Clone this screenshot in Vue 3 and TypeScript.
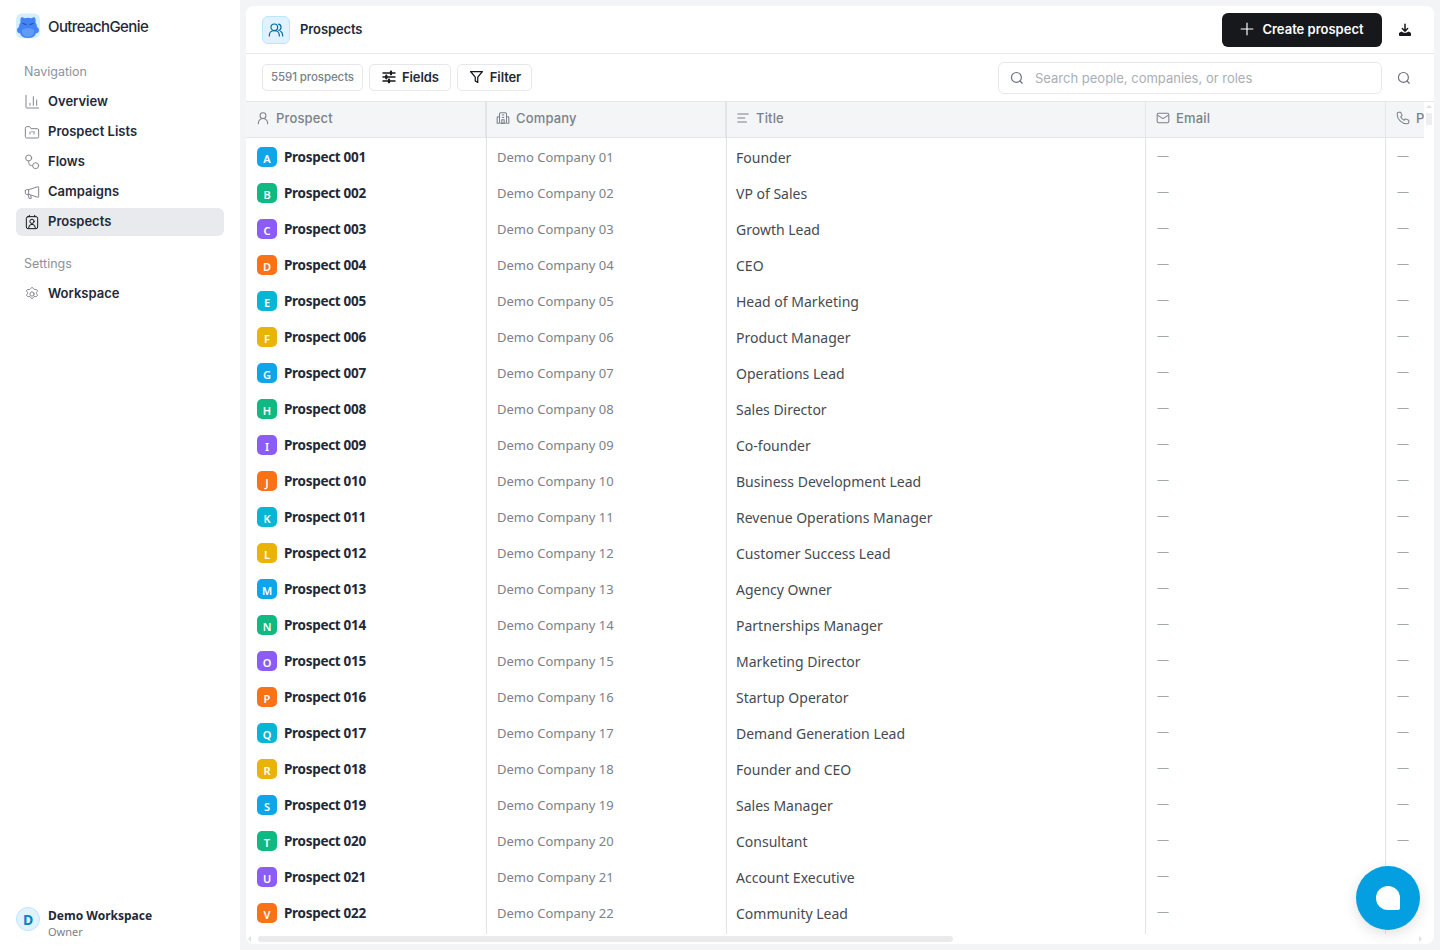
<script setup lang="ts">
const navItems = [
  { label: 'Overview', icon: 'chart' },
  { label: 'Prospect Lists', icon: 'folder' },
  { label: 'Flows', icon: 'flow' },
  { label: 'Campaigns', icon: 'megaphone' },
  { label: 'Prospects', icon: 'contact', active: true },
]

const titles = [
  'Founder', 'VP of Sales', 'Growth Lead', 'CEO', 'Head of Marketing', 'Product Manager',
  'Operations Lead', 'Sales Director', 'Co-founder', 'Business Development Lead',
  'Revenue Operations Manager', 'Customer Success Lead', 'Agency Owner', 'Partnerships Manager',
  'Marketing Director', 'Startup Operator', 'Demand Generation Lead', 'Founder and CEO',
  'Sales Manager', 'Consultant', 'Account Executive', 'Community Lead',
]
const colors = ['#0ea5e9', '#10b981', '#8b5cf6', '#f97316', '#06b6d4', '#eab308']

const rows = titles.map((title, i) => ({
  name: 'Prospect ' + String(i + 1).padStart(3, '0'),
  company: 'Demo Company ' + String(i + 1).padStart(2, '0'),
  title,
  letter: String.fromCharCode(65 + i),
  color: colors[i % colors.length],
}))
</script>

<template>
  <div class="page">
    <aside class="sidebar">
      <div class="brand">
        <svg class="logo" width="26" height="26" viewBox="0 0 26 26">
          <rect x="1" y="0.5" width="24" height="25" rx="6" fill="#d3eefc" />
          <path d="M6 4.500 Q7.500 3.500 9.500 5.200 Q13 4.500 16.500 5.200 Q18.500 3.500 20 4.500 Q21 7 20.500 9.500 Q22 11 22 14 Q25 16 23.500 19 Q22.500 20.500 21 20 Q20 25 13 25 Q6 25 5 20 Q3.500 20.500 2.500 19 Q1 16 4 14 Q4 11 5.500 9.500 Q5 7 6 4.500Z" fill="#4384f5" />
          <path d="M7 17 Q13 13 19 17 Q20 23 13 24 Q6 23 7 17Z" fill="#609bf9" />
          <path d="M8 10.500 L11 11.500M18 10.500 L15 11.500" stroke="#2450b0" stroke-width="1.300" stroke-linecap="round" />
        </svg>
        <span class="brand-name">OutreachGenie</span>
      </div>

      <div class="nav-label">Navigation</div>
      <nav class="nav">
        <a v-for="item in navItems" :key="item.label" class="nav-item" :class="{ active: item.active }">
          <svg class="nav-icon" width="16" height="16" viewBox="0 0 24 24" fill="none" stroke="currentColor" stroke-width="1.500" stroke-linecap="round" stroke-linejoin="round">
            <template v-if="item.icon === 'chart'">
              <path d="M3 2v18a1 1 0 0 0 1 1h18" /><path d="M9 17v-3M14 17V4M19 17V9" />
            </template>
            <template v-else-if="item.icon === 'folder'">
              <path d="M2 6a2 2 0 0 1 2-2h4.500l2 3H20a2 2 0 0 1 2 2v10a2 2 0 0 1-2 2H4a2 2 0 0 1-2-2z" /><path d="M9 12v3M15 11v4M12 11v1" />
            </template>
            <template v-else-if="item.icon === 'flow'">
              <circle cx="7" cy="6" r="4.500" /><circle cx="17.500" cy="17.500" r="4.500" /><path d="M7 10.500V13a4.500 4.500 0 0 0 4.500 4.500H13" />
            </template>
            <template v-else-if="item.icon === 'megaphone'">
              <path d="M2 10v4a1.500 1.500 0 0 0 1.500 1.500H7L21 20a1 1 0 0 0 1-1V5a1 1 0 0 0-1-1L7 8.500H3.500A1.500 1.500 0 0 0 2 10z" /><path d="M7 8.500v7M6 15.500l1.500 6h3.500L10 17" />
            </template>
            <template v-else>
              <rect x="3.500" y="4" width="17" height="18" rx="2.500" /><path d="M8 2v2M16 2v2" /><circle cx="12" cy="11" r="3.200" /><path d="M7 20.500a5 5 0 0 1 10 0" />
            </template>
          </svg>
          <span class="nav-text">{{ item.label }}</span>
        </a>
      </nav>

      <div class="nav-label settings-label">Settings</div>
      <nav class="nav">
        <a class="nav-item">
          <svg class="nav-icon" width="16" height="16" viewBox="0 0 24 24" fill="none" stroke="currentColor" stroke-width="1.500" stroke-linecap="round" stroke-linejoin="round">
            <path d="M10.300 3.200a2 2 0 0 1 3.400 0l.7 1.200a2 2 0 0 0 2 1l1.400-.2a2 2 0 0 1 1.900 3.100l-.8 1.100a2 2 0 0 0 0 2.200l.8 1.100a2 2 0 0 1-1.900 3.100l-1.400-.2a2 2 0 0 0-2 1l-.7 1.200a2 2 0 0 1-3.400 0l-.7-1.200a2 2 0 0 0-2-1l-1.400.2a2 2 0 0 1-1.900-3.100l.8-1.100a2 2 0 0 0 0-2.200l-.8-1.100a2 2 0 0 1 1.900-3.100l1.400.2a2 2 0 0 0 2-1z" />
            <circle cx="12" cy="12" r="3.200" />
          </svg>
          <span class="nav-text">Workspace</span>
        </a>
      </nav>

      <div class="account">
        <div class="account-avatar">D</div>
        <div>
          <div class="account-name">Demo Workspace</div>
          <div class="account-role">Owner</div>
        </div>
      </div>
    </aside>

    <main class="card">
      <header class="topbar">
        <div class="page-icon">
          <svg width="16" height="16" viewBox="0 0 24 24" fill="none" stroke="currentColor" stroke-width="1.800" stroke-linecap="round" stroke-linejoin="round">
            <circle cx="9.500" cy="8" r="5" /><path d="M2 21v-1a7 7 0 0 1 7-7h1a7 7 0 0 1 7 7v1" /><path d="M16 3.200a5 5 0 0 1 0 9.600M19 14a7 7 0 0 1 3 6v1" />
          </svg>
        </div>
        <h1 class="page-title">Prospects</h1>
        <button class="create-btn">
          <svg width="14" height="14" viewBox="0 0 24 24" fill="none" stroke="currentColor" stroke-width="2" stroke-linecap="round"><path d="M12 2v20M2 12h20" /></svg>
          Create prospect
        </button>
        <button class="download-btn" aria-label="Download">
          <svg width="14" height="14" viewBox="0 0 24 24" fill="none" stroke="#17181c" stroke-width="2.600" stroke-linecap="round" stroke-linejoin="round">
            <path d="M12 2v12M7.500 9.500 12 14l4.500-4.500" /><path d="M3 21v-3l3-2 3 2h6l3-2 3 2v3z" fill="#17181c" />
          </svg>
        </button>
      </header>

      <div class="toolbar">
        <span class="count">5591 prospects</span>
        <button class="tool-btn fields">
          <svg width="16" height="16" viewBox="0 0 24 24" fill="none" stroke="#17181c" stroke-width="2.200" stroke-linecap="round">
            <path d="M3 6h18M3 12h18M3 18h18" /><path d="M15 4v4M8 10v4M12 16v4" stroke-width="3.400" />
          </svg>
          Fields
        </button>
        <button class="tool-btn filter">
          <svg width="15" height="15" viewBox="0 0 24 24" fill="none" stroke="#17181c" stroke-width="2" stroke-linejoin="round">
            <path d="M2.500 4h19l-7.500 9v8.500l-4-2.500v-6z" />
          </svg>
          Filter
        </button>
        <label class="search">
          <svg width="14" height="14" viewBox="0 0 24 24" fill="none" stroke="#6b7280" stroke-width="2" stroke-linecap="round"><circle cx="11" cy="11" r="8.500" /><path d="m21 21-3.800-3.800" /></svg>
          <input type="text" placeholder="Search people, companies, or roles" />
        </label>
        <button class="search-btn" aria-label="Search">
          <svg width="14" height="14" viewBox="0 0 24 24" fill="none" stroke="#6b7280" stroke-width="2" stroke-linecap="round"><circle cx="11" cy="11" r="8.500" /><path d="m21 21-3.800-3.800" /></svg>
        </button>
      </div>

      <div class="table-wrap">
        <div class="table">
          <div class="th first thick">
            <svg width="14" height="14" viewBox="0 0 24 24" fill="none" stroke="currentColor" stroke-width="1.800" stroke-linecap="round"><circle cx="12" cy="8" r="5" /><path d="M4 22v-1a8 8 0 0 1 16 0v1" /></svg>
            Prospect
          </div>
          <div class="th thick">
            <svg width="14" height="14" viewBox="0 0 24 24" fill="none" stroke="currentColor" stroke-width="1.800" stroke-linejoin="round"><rect x="6" y="3" width="12" height="18" rx="2" /><path d="M6 10H3.500A1.500 1.500 0 0 0 2 11.500V21h4M18 10h2.500a1.500 1.500 0 0 1 1.500 1.500V21h-4M10 7h4M10 11h4M10 15h4v6h-4z" /></svg>
            Company
          </div>
          <div class="th">
            <svg width="14" height="14" viewBox="0 0 24 24" fill="none" stroke="currentColor" stroke-width="1.800" stroke-linecap="round"><path d="M3 5h18M3 12h12M3 19h15" /></svg>
            Title
          </div>
          <div class="th contact">
            <svg width="14" height="14" viewBox="0 0 24 24" fill="none" stroke="currentColor" stroke-width="1.800" stroke-linejoin="round"><rect x="2" y="4" width="20" height="16" rx="2.500" /><path d="m2.500 7 9.500 6 9.500-6" /></svg>
            Email
          </div>
          <div class="th contact">
            <svg width="14" height="14" viewBox="0 0 24 24" fill="none" stroke="currentColor" stroke-width="1.800" stroke-linejoin="round"><path d="M5 2h3l2.500 6-2.500 2a14 14 0 0 0 6 6l2-2.500 6 2.500v3a3 3 0 0 1-3 3A17 17 0 0 1 2 5a3 3 0 0 1 3-3z" /></svg>
            Phone
          </div>

          <template v-for="row in rows" :key="row.name">
            <div class="td name-cell">
              <span class="avatar" :style="{ background: row.color }">{{ row.letter }}</span>
              <span class="name">{{ row.name }}</span>
            </div>
            <div class="td company">{{ row.company }}</div>
            <div class="td job">{{ row.title }}</div>
            <div class="td dash">—</div>
            <div class="td dash">—</div>
          </template>
          <div v-for="n in 5" :key="n" class="td" :class="{ 'name-cell': n === 1 }"></div>
        </div>
        <div class="vscroll"><i class="arrow-up"></i><i class="vthumb"></i><i class="arrow-down"></i></div>
      </div>

      <div class="hscroll"><i class="arrow-left"></i><i class="hthumb"></i><i class="arrow-right"></i></div>

      <button class="chat-btn" aria-label="Open chat"><span class="bubble"></span></button>
    </main>
  </div>
</template>

<style>
body {
  background: #f3f4f6;
}
</style>

<style scoped>
.page {
  display: flex;
  width: 1440px;
  height: 950px;
  overflow: hidden;
  background: #f3f4f6;
  font-family: Inter, "Liberation Sans", sans-serif;
  color: #17181c;
}
.sidebar {
  width: 240px;
  flex: none;
  display: flex;
  flex-direction: column;
  box-sizing: border-box;
  background: #fff;
  padding: 13px 16px 11px;
}
.brand {
  display: flex;
  align-items: center;
  gap: 7px;
  height: 26px;
  margin-left: -1px;
}
.brand-name {
  font-size: 15px;
  font-weight: 500;
  letter-spacing: -0.6px;
  color: #1f2937;
}
.nav-label {
  margin: 19px 0 0 8px;
  height: 30px;
  line-height: 28px;
  font-size: 12.500px;
  color: #8b929c;
}
.settings-label {
  margin-top: 14px;
}
.nav {
  display: flex;
  flex-direction: column;
  gap: 2px;
}
.nav-item {
  display: flex;
  align-items: center;
  gap: 8px;
  height: 28px;
  padding: 0 8px;
  border-radius: 6px;
  font-size: 13px;
  font-weight: 600;
  color: #1f2937;
}
.nav-text {
  margin-top: -2px;
}
.nav-icon {
  color: #80868f;
}
.nav-item.active {
  background: #e8eaee;
}
.nav-item.active .nav-icon {
  color: #17181c;
}
.account {
  margin-top: auto;
  display: flex;
  align-items: flex-start;
  gap: 8px;
  font-family: "Noto Sans", sans-serif;
}
.account-avatar {
  width: 24px;
  height: 24px;
  box-sizing: border-box;
  border-radius: 50%;
  background: #e0f2fe;
  border: 1px solid #bae6fd;
  color: #0284c7;
  display: flex;
  align-items: center;
  justify-content: center;
  font-size: 14px;
  font-weight: 700;
}
.account-name {
  padding-top: 1px;
  font-size: 12px;
  line-height: 16px;
  font-weight: 700;
  color: #1f2937;
}
.account-role {
  font-size: 11px;
  line-height: 15px;
  color: #7b818a;
}
.card {
  position: relative;
  margin: 6px;
  width: 1188px;
  height: 938px;
  display: flex;
  flex-direction: column;
  background: #fff;
  border-radius: 8px;
  overflow: hidden;
}
.topbar {
  height: 48px;
  flex: none;
  box-sizing: border-box;
  display: flex;
  align-items: center;
  padding: 1px 12px 0 16px;
  border-bottom: 1px solid #e5e7eb;
}
.page-icon {
  width: 28px;
  height: 28px;
  box-sizing: border-box;
  border-radius: 6px;
  background: #e0f2fe;
  border: 1px solid #bae6fd;
  color: #0369a1;
  display: flex;
  align-items: center;
  justify-content: center;
}
.page-title {
  margin: 0 0 2px 10px;
  font-size: 13px;
  font-weight: 600;
  letter-spacing: -0.1px;
  color: #1f2937;
}
.create-btn {
  margin-left: auto;
  width: 160px;
  height: 34px;
  display: flex;
  align-items: center;
  justify-content: center;
  gap: 8px;
  padding: 0 0 2px;
  background: #17181c;
  color: #fff;
  border: none;
  border-radius: 6px;
  font: 600 13px Inter, sans-serif;
}
.download-btn {
  width: 34px;
  height: 34px;
  margin-left: 6px;
  padding: 0 1px 0 0;
  border: none;
  background: none;
  display: flex;
  align-items: center;
  justify-content: center;
}
.toolbar {
  height: 48px;
  flex: none;
  box-sizing: border-box;
  display: flex;
  align-items: center;
  gap: 6px;
  padding: 0 13px 0 16px;
  border-bottom: 1px solid #e5e7eb;
}
.count {
  width: 101px;
  height: 27px;
  box-sizing: border-box;
  display: flex;
  align-items: center;
  justify-content: center;
  padding-bottom: 2px;
  border: 1px solid #e5e7eb;
  border-radius: 5px;
  font-size: 11.500px;
  font-weight: 500;
  color: #7b818a;
  letter-spacing: -0.1px;
}
.tool-btn {
  height: 27px;
  box-sizing: border-box;
  display: flex;
  align-items: center;
  padding: 0 11px 2px;
  background: #fff;
  border: 1px solid #e5e7eb;
  border-radius: 5px;
  font: 600 13px Inter, sans-serif;
  letter-spacing: -0.1px;
  color: #1f2937;
}
.tool-btn.fields {
  gap: 5px;
}
.tool-btn.filter {
  gap: 6px;
  padding-right: 10px;
}
.search {
  margin-left: auto;
  width: 384px;
  height: 32px;
  box-sizing: border-box;
  display: flex;
  align-items: center;
  gap: 11px;
  padding: 0 11px;
  border: 1px solid #e5e7eb;
  border-radius: 6px;
}
.search input {
  flex: 1;
  min-width: 0;
  border: none;
  outline: none;
  padding: 0;
  font: 400 13px Inter, sans-serif;
}
.search input::placeholder {
  color: #a9aeb6;
}
.search-btn {
  width: 34px;
  height: 34px;
  margin-left: -1px;
  padding: 0;
  border: none;
  background: none;
  display: flex;
  align-items: center;
  justify-content: center;
}
.table-wrap {
  flex: 1;
  min-height: 0;
  display: flex;
  overflow: hidden;
}
.table {
  flex: 1;
  min-width: 0;
  display: grid;
  grid-template-columns: 240px 240px 419px 240px 240px;
  grid-auto-rows: 36px;
  align-content: start;
  overflow: hidden;
}
.th {
  display: flex;
  align-items: center;
  gap: 6px;
  box-sizing: border-box;
  padding: 0 0 3px 9px;
  background: #f3f5f7;
  border-bottom: 1px solid #e5e7eb;
  border-left: 1px solid #e2e4e8;
  font-size: 13px;
  font-weight: 500;
  letter-spacing: 0.15px;
  color: #7b818a;
  white-space: nowrap;
}
.th.first {
  padding-left: 10px;
  border-left: none;
}
.th.thick {
  border-right: 1px solid #e2e4e8;
}
.th.contact {
  padding-left: 10px;
}
.td {
  display: flex;
  align-items: center;
  box-sizing: border-box;
  padding-top: 2px;
  border-left: 1px solid #e2e4e8;
  font-family: "Noto Sans", sans-serif;
  white-space: nowrap;
}
.name-cell {
  gap: 7px;
  padding-left: 11px;
  border-left: none;
}
.avatar {
  width: 20px;
  height: 20px;
  border-radius: 5px;
  display: flex;
  align-items: center;
  justify-content: center;
  padding-top: 2px;
  box-sizing: border-box;
  color: #fff;
  font-size: 11px;
  font-weight: 600;
}
.name {
  font-size: 13.500px;
  font-weight: 700;
  letter-spacing: -0.3px;
  color: #1f2937;
}
.company {
  padding-left: 10px;
  font-size: 13px;
  color: #7b818a;
}
.job {
  padding-left: 9px;
  font-size: 14px;
  color: #454a52;
}
.dash {
  padding-left: 11px;
  padding-bottom: 4px;
  font-size: 12px;
  color: #a3a8b0;
}
.vscroll {
  position: relative;
  width: 10px;
  flex: none;
  background: #fff;
}
.arrow-up {
  position: absolute;
  top: 3px;
  left: 2px;
  border: 3px solid transparent;
  border-bottom-color: #dfe1e5;
  border-top: 0;
}
.vthumb {
  position: absolute;
  top: 11px;
  left: 2px;
  width: 6px;
  height: 12px;
  background: #eceef0;
}
.arrow-down {
  position: absolute;
  bottom: -7px;
  left: 2px;
  border: 3px solid transparent;
  border-top-color: #dfe1e5;
  border-bottom: 0;
}
.hscroll {
  height: 10px;
  flex: none;
  position: relative;
}
.arrow-left {
  position: absolute;
  left: 2px;
  top: 2px;
  border: 3px solid transparent;
  border-right-color: #dfe1e5;
  border-left: 0;
}
.arrow-right {
  position: absolute;
  right: 12px;
  top: 2px;
  border: 3px solid transparent;
  border-left-color: #dfe1e5;
  border-right: 0;
}
.hthumb {
  position: absolute;
  left: 12px;
  top: 2px;
  width: 695px;
  height: 6px;
  border-radius: 3px;
  background: #e9eaec;
}
.chat-btn {
  position: absolute;
  right: 14px;
  bottom: 14px;
  width: 64px;
  height: 64px;
  padding: 0;
  border: none;
  border-radius: 50%;
  background: #039fe0;
  box-shadow: 0 4px 14px rgba(0, 0, 0, 0.12);
  display: flex;
  align-items: center;
  justify-content: center;
}
.bubble {
  width: 24px;
  height: 24px;
  background: #fff;
  border-radius: 50% 50% 2px 50%;
}
</style>
